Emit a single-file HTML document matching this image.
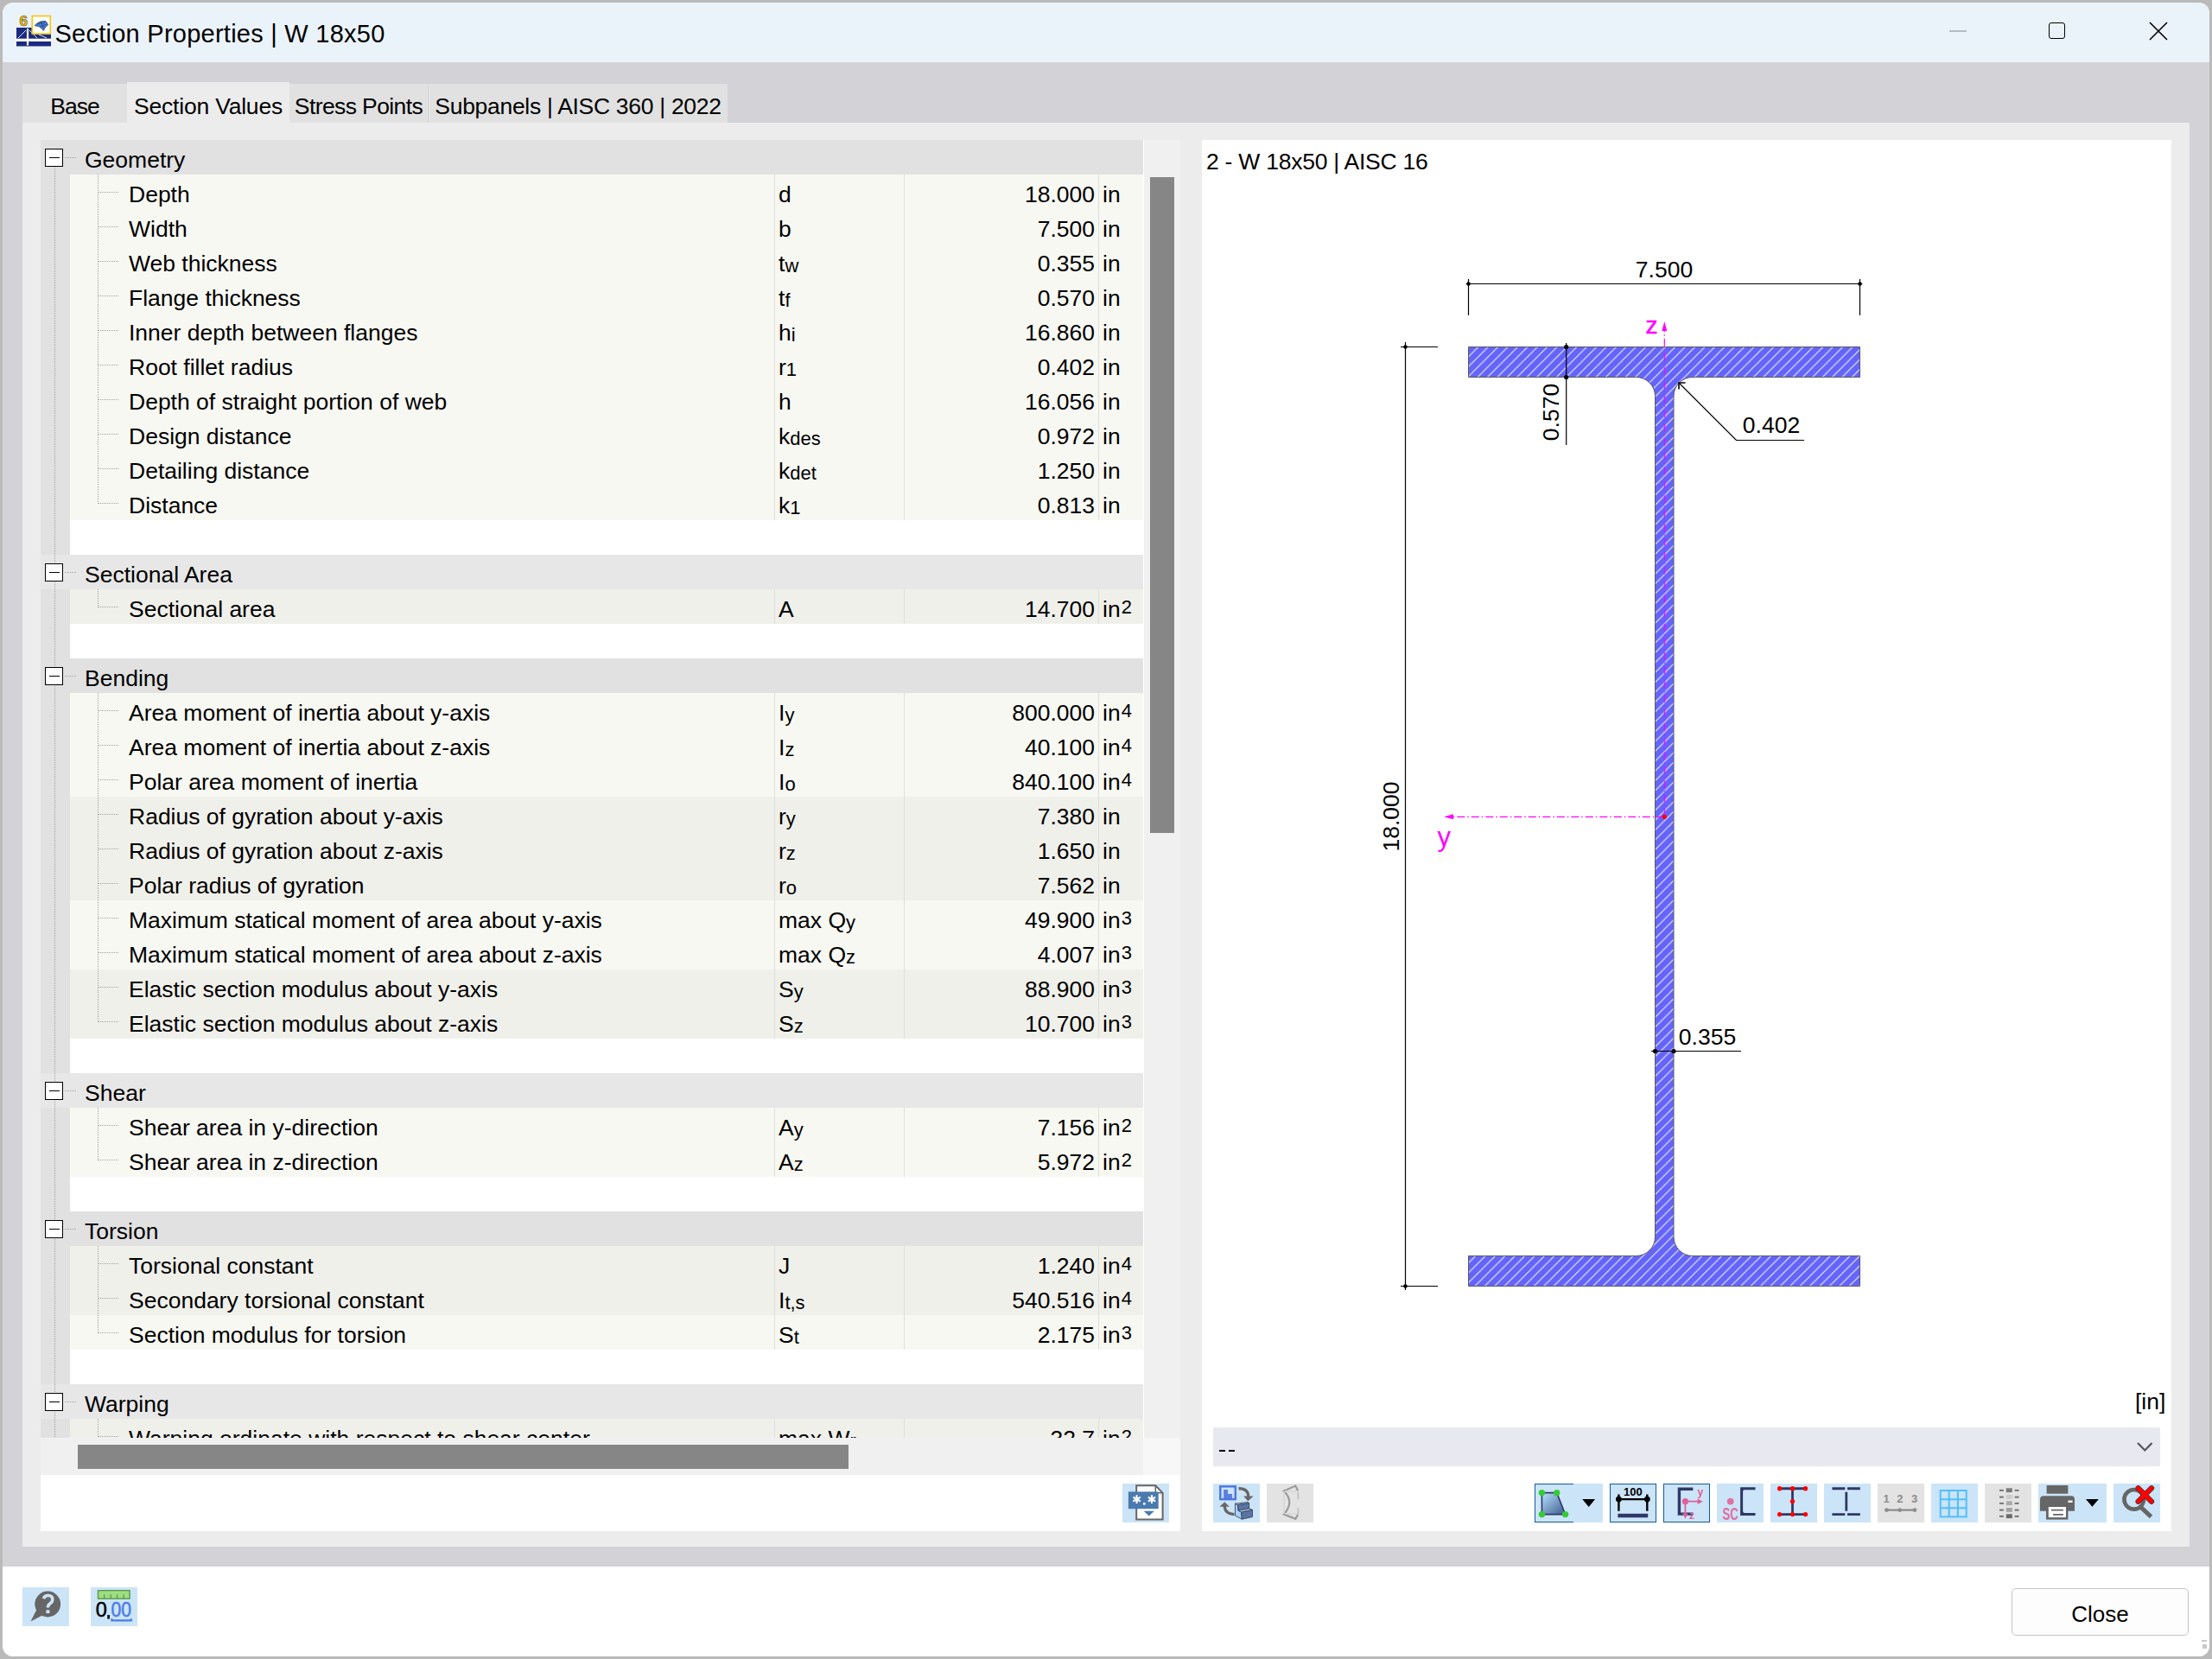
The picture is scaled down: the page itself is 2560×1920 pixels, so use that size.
<!DOCTYPE html>
<html><head><meta charset="utf-8">
<style>
html,body{margin:0;padding:0}
body{width:2560px;height:1920px;overflow:hidden;position:relative;background:#bababa;font-family:"Liberation Sans",sans-serif;color:#000}
.a{position:absolute}
#win{position:absolute;left:0;top:0;width:2560px;height:1920px;clip-path:inset(3px 3px 3px 3px round 12px);background:#d3d2d7}
#title{left:0;top:0;width:2560px;height:72px;background:#ebf3fa}
.tt{font-size:29px;white-space:nowrap;line-height:1}
.tab{position:absolute;top:97px;height:45px;background:#e1e1e1;font-size:26.5px;text-align:center;white-space:nowrap}
.tab span{position:absolute;left:0;right:0;top:13px;line-height:1}
#content{left:26px;top:142px;width:2508px;height:1648px;background:#ececec}
#lp{left:47px;top:162px;width:1319px;height:1610px;background:#fff}
#tbl{left:47px;top:162px;width:1276px;height:1502px;overflow:hidden;background:#e1e1e1}
.hd{position:absolute;left:0;width:1276px;height:40px;background:#e1e1e1}
.ht{position:absolute;left:51px;top:9.5px;font-size:26.5px;line-height:1;white-space:nowrap}
.rw{position:absolute;left:34px;width:1242px;height:40px;font-size:26.5px;white-space:nowrap}
.bl{position:absolute;left:34px;width:1242px;height:40px;background:#fff}
.rw span{position:absolute;top:10px;line-height:1}
.rw .lb{left:68px}
.rw .sy{left:820px}
.rw .vl{right:56px}
.rw .un{left:1195px}
.rw .c1,.rw .c2,.rw .c3{top:0;height:40px;width:1px;background:#dededa}
.rw .c1{left:815px} .rw .c2{left:965px} .rw .c3{left:1190px}
.sb{position:relative!important;font-size:22px;top:1px!important}
.sp{position:relative!important;font-size:22px;top:-4.5px!important;margin-left:1px}
.box{position:absolute;left:5px;width:19px;height:19px;border:1.5px solid #000;background:#fff}
.box:after{content:"";position:absolute;left:3.5px;top:8.5px;width:12px;height:1.5px;background:#000}
.dh{position:absolute;height:1px;background:repeating-linear-gradient(90deg,#a0a0a0 0 1px,transparent 1px 2px)}
.dv{position:absolute;width:1px;background:repeating-linear-gradient(180deg,#a0a0a0 0 1px,transparent 1px 2px)}
.btn{position:absolute;width:54px;height:45px;background:#cce4f7}
.dis{background:#e3e3e3}
.bord{box-sizing:border-box;border:1.5px solid #0f5aa8}
</style></head><body>
<div id="win">
 <div id="title" class="a"></div>
 <!-- app icon -->
 <svg class="a" style="left:0;top:0" width="70" height="70">
  <rect x="19" y="32" width="40" height="21.5" fill="#1a2a7f"/>
  <rect x="19" y="44.7" width="40" height="3.3" fill="#fff"/>
  <rect x="30.9" y="33" width="2.2" height="19.5" fill="#fff"/>
  <path d="M21 44L30 35M34 35L43 44M45 40L54 44" stroke="#dfe4f5" stroke-width="1"/>
  <text x="22.6" y="30.2" font-family="Liberation Sans" font-weight="bold" font-size="17" fill="#f5c518" stroke="#5a4a10" stroke-width="0.6">6</text>
  <rect x="37.3" y="18.5" width="21" height="20.6" fill="#fff" stroke="#f5c518" stroke-width="1.7"/>
  <path d="M40 29.5Q46 23.5 53 24.5Q55 27 55.5 29Q51 32 50.5 35.5Q46 29.5 40 29.5Z" fill="#3d7be0" stroke="#333" stroke-width="0.7"/>
  <path d="M43 28L52 26M46 31L54 28M47 25L51 33" stroke="#222" stroke-width="0.5"/>
 </svg>
 <div class="a tt" style="left:63.5px;top:25px;letter-spacing:0.25px">Section Properties | W 18x50</div>
 <!-- window controls -->
 <div class="a" style="left:2256px;top:35px;width:20px;height:2px;background:#b4bcc2"></div>
 <div class="a" style="left:2371px;top:26px;width:16.6px;height:16.6px;border:1.9px solid #000;border-radius:3px"></div>
 <svg class="a" style="left:2486px;top:24px" width="24" height="24"><path d="M2 2L22 22M22 2L2 22" stroke="#000" stroke-width="1.6"/></svg>

 <!-- tabs -->
 <div class="tab" style="left:26px;width:121px"><span style="letter-spacing:-1px">Base</span></div>
 <div class="tab" style="left:147px;width:188px;top:95px;height:47px;background:#ececec"><span style="top:15px;letter-spacing:-0.2px">Section Values</span></div>
 <div class="tab" style="left:335px;width:160px"><span style="letter-spacing:-0.6px">Stress Points</span></div>
 <div class="a" style="left:495px;top:97px;width:1px;height:45px;background:#d6d6d6"></div>
 <div class="tab" style="left:496px;width:346px"><span style="letter-spacing:-0.3px">Subpanels | AISC 360 | 2022</span></div>

 <div id="content" class="a"></div>
 <div id="lp" class="a"></div>
 <div id="tbl" class="a">
<div class="hd" style="top:0px;left:34px;width:1242px;background:#e1e1e1"><span class="ht" style="left:17px">Geometry</span></div>
<div class="hd" style="top:0px;left:0;width:34px;background:#e1e1e1"></div>
<div class="rw" style="top:40px;background:#f8f8f3"><span class="lb">Depth</span><span class="c1"></span><span class="sy">d</span><span class="c2"></span><span class="vl">18.000</span><span class="c3"></span><span class="un">in</span></div>
<div class="rw" style="top:80px;background:#f8f8f3"><span class="lb">Width</span><span class="c1"></span><span class="sy">b</span><span class="c2"></span><span class="vl">7.500</span><span class="c3"></span><span class="un">in</span></div>
<div class="rw" style="top:120px;background:#f8f8f3"><span class="lb">Web thickness</span><span class="c1"></span><span class="sy">t<span class="sb">w</span></span><span class="c2"></span><span class="vl">0.355</span><span class="c3"></span><span class="un">in</span></div>
<div class="rw" style="top:160px;background:#f8f8f3"><span class="lb">Flange thickness</span><span class="c1"></span><span class="sy">t<span class="sb">f</span></span><span class="c2"></span><span class="vl">0.570</span><span class="c3"></span><span class="un">in</span></div>
<div class="rw" style="top:200px;background:#f8f8f3"><span class="lb">Inner depth between flanges</span><span class="c1"></span><span class="sy">h<span class="sb">i</span></span><span class="c2"></span><span class="vl">16.860</span><span class="c3"></span><span class="un">in</span></div>
<div class="rw" style="top:240px;background:#f8f8f3"><span class="lb">Root fillet radius</span><span class="c1"></span><span class="sy">r<span class="sb">1</span></span><span class="c2"></span><span class="vl">0.402</span><span class="c3"></span><span class="un">in</span></div>
<div class="rw" style="top:280px;background:#f8f8f3"><span class="lb">Depth of straight portion of web</span><span class="c1"></span><span class="sy">h</span><span class="c2"></span><span class="vl">16.056</span><span class="c3"></span><span class="un">in</span></div>
<div class="rw" style="top:320px;background:#f8f8f3"><span class="lb">Design distance</span><span class="c1"></span><span class="sy">k<span class="sb">des</span></span><span class="c2"></span><span class="vl">0.972</span><span class="c3"></span><span class="un">in</span></div>
<div class="rw" style="top:360px;background:#f8f8f3"><span class="lb">Detailing distance</span><span class="c1"></span><span class="sy">k<span class="sb">det</span></span><span class="c2"></span><span class="vl">1.250</span><span class="c3"></span><span class="un">in</span></div>
<div class="rw" style="top:400px;background:#f8f8f3"><span class="lb">Distance</span><span class="c1"></span><span class="sy">k<span class="sb">1</span></span><span class="c2"></span><span class="vl">0.813</span><span class="c3"></span><span class="un">in</span></div>
<div class="bl" style="top:440px"></div>
<div class="hd" style="top:480px;left:34px;width:1242px;background:#e7e7e7"><span class="ht" style="left:17px">Sectional Area</span></div>
<div class="hd" style="top:480px;left:0;width:34px;background:#e7e7e7"></div>
<div class="rw" style="top:520px;background:#f0f0eb"><span class="lb">Sectional area</span><span class="c1"></span><span class="sy">A</span><span class="c2"></span><span class="vl">14.700</span><span class="c3"></span><span class="un">in<span class="sp">2</span></span></div>
<div class="bl" style="top:560px"></div>
<div class="hd" style="top:600px;left:34px;width:1242px;background:#e1e1e1"><span class="ht" style="left:17px">Bending</span></div>
<div class="hd" style="top:600px;left:0;width:34px;background:#e1e1e1"></div>
<div class="rw" style="top:640px;background:#f8f8f3"><span class="lb">Area moment of inertia about y-axis</span><span class="c1"></span><span class="sy">I<span class="sb">y</span></span><span class="c2"></span><span class="vl">800.000</span><span class="c3"></span><span class="un">in<span class="sp">4</span></span></div>
<div class="rw" style="top:680px;background:#f8f8f3"><span class="lb">Area moment of inertia about z-axis</span><span class="c1"></span><span class="sy">I<span class="sb">z</span></span><span class="c2"></span><span class="vl">40.100</span><span class="c3"></span><span class="un">in<span class="sp">4</span></span></div>
<div class="rw" style="top:720px;background:#f8f8f3"><span class="lb">Polar area moment of inertia</span><span class="c1"></span><span class="sy">I<span class="sb">o</span></span><span class="c2"></span><span class="vl">840.100</span><span class="c3"></span><span class="un">in<span class="sp">4</span></span></div>
<div class="rw" style="top:760px;background:#f0f0eb"><span class="lb">Radius of gyration about y-axis</span><span class="c1"></span><span class="sy">r<span class="sb">y</span></span><span class="c2"></span><span class="vl">7.380</span><span class="c3"></span><span class="un">in</span></div>
<div class="rw" style="top:800px;background:#f0f0eb"><span class="lb">Radius of gyration about z-axis</span><span class="c1"></span><span class="sy">r<span class="sb">z</span></span><span class="c2"></span><span class="vl">1.650</span><span class="c3"></span><span class="un">in</span></div>
<div class="rw" style="top:840px;background:#f0f0eb"><span class="lb">Polar radius of gyration</span><span class="c1"></span><span class="sy">r<span class="sb">o</span></span><span class="c2"></span><span class="vl">7.562</span><span class="c3"></span><span class="un">in</span></div>
<div class="rw" style="top:880px;background:#f8f8f3"><span class="lb">Maximum statical moment of area about y-axis</span><span class="c1"></span><span class="sy">max Q<span class="sb">y</span></span><span class="c2"></span><span class="vl">49.900</span><span class="c3"></span><span class="un">in<span class="sp">3</span></span></div>
<div class="rw" style="top:920px;background:#f8f8f3"><span class="lb">Maximum statical moment of area about z-axis</span><span class="c1"></span><span class="sy">max Q<span class="sb">z</span></span><span class="c2"></span><span class="vl">4.007</span><span class="c3"></span><span class="un">in<span class="sp">3</span></span></div>
<div class="rw" style="top:960px;background:#f0f0eb"><span class="lb">Elastic section modulus about y-axis</span><span class="c1"></span><span class="sy">S<span class="sb">y</span></span><span class="c2"></span><span class="vl">88.900</span><span class="c3"></span><span class="un">in<span class="sp">3</span></span></div>
<div class="rw" style="top:1000px;background:#f0f0eb"><span class="lb">Elastic section modulus about z-axis</span><span class="c1"></span><span class="sy">S<span class="sb">z</span></span><span class="c2"></span><span class="vl">10.700</span><span class="c3"></span><span class="un">in<span class="sp">3</span></span></div>
<div class="bl" style="top:1040px"></div>
<div class="hd" style="top:1080px;left:34px;width:1242px;background:#e7e7e7"><span class="ht" style="left:17px">Shear</span></div>
<div class="hd" style="top:1080px;left:0;width:34px;background:#e7e7e7"></div>
<div class="rw" style="top:1120px;background:#f8f8f3"><span class="lb">Shear area in y-direction</span><span class="c1"></span><span class="sy">A<span class="sb">y</span></span><span class="c2"></span><span class="vl">7.156</span><span class="c3"></span><span class="un">in<span class="sp">2</span></span></div>
<div class="rw" style="top:1160px;background:#f8f8f3"><span class="lb">Shear area in z-direction</span><span class="c1"></span><span class="sy">A<span class="sb">z</span></span><span class="c2"></span><span class="vl">5.972</span><span class="c3"></span><span class="un">in<span class="sp">2</span></span></div>
<div class="bl" style="top:1200px"></div>
<div class="hd" style="top:1240px;left:34px;width:1242px;background:#e1e1e1"><span class="ht" style="left:17px">Torsion</span></div>
<div class="hd" style="top:1240px;left:0;width:34px;background:#e1e1e1"></div>
<div class="rw" style="top:1280px;background:#f0f0eb"><span class="lb">Torsional constant</span><span class="c1"></span><span class="sy">J</span><span class="c2"></span><span class="vl">1.240</span><span class="c3"></span><span class="un">in<span class="sp">4</span></span></div>
<div class="rw" style="top:1320px;background:#f0f0eb"><span class="lb">Secondary torsional constant</span><span class="c1"></span><span class="sy">I<span class="sb">t,s</span></span><span class="c2"></span><span class="vl">540.516</span><span class="c3"></span><span class="un">in<span class="sp">4</span></span></div>
<div class="rw" style="top:1360px;background:#f8f8f3"><span class="lb">Section modulus for torsion</span><span class="c1"></span><span class="sy">S<span class="sb">t</span></span><span class="c2"></span><span class="vl">2.175</span><span class="c3"></span><span class="un">in<span class="sp">3</span></span></div>
<div class="bl" style="top:1400px"></div>
<div class="hd" style="top:1440px;left:34px;width:1242px;background:#e7e7e7"><span class="ht" style="left:17px">Warping</span></div>
<div class="hd" style="top:1440px;left:0;width:34px;background:#e7e7e7"></div>
<div class="rw" style="top:1480px;background:#f0f0eb"><span class="lb">Warping ordinate with respect to shear center</span><span class="c1"></span><span class="sy">max W<span class="sb">r</span></span><span class="c2"></span><span class="vl">32.7</span><span class="c3"></span><span class="un">in<span class="sp">2</span></span></div>
<div class="bl" style="top:1520px"></div>
<div class="dv" style="left:16px;top:32px;height:1500px"></div>
<div class="box" style="top:10px"></div>
<div class="dh" style="left:28px;top:20px;width:13px"></div>
<div class="dh" style="left:67px;top:60px;width:24px"></div>
<div class="dh" style="left:67px;top:100px;width:24px"></div>
<div class="dh" style="left:67px;top:140px;width:24px"></div>
<div class="dh" style="left:67px;top:180px;width:24px"></div>
<div class="dh" style="left:67px;top:220px;width:24px"></div>
<div class="dh" style="left:67px;top:260px;width:24px"></div>
<div class="dh" style="left:67px;top:300px;width:24px"></div>
<div class="dh" style="left:67px;top:340px;width:24px"></div>
<div class="dh" style="left:67px;top:380px;width:24px"></div>
<div class="dh" style="left:67px;top:420px;width:24px"></div>
<div class="dv" style="left:66px;top:40px;height:381px"></div>
<div class="box" style="top:490px"></div>
<div class="dh" style="left:28px;top:500px;width:13px"></div>
<div class="dh" style="left:67px;top:540px;width:24px"></div>
<div class="dv" style="left:66px;top:520px;height:21px"></div>
<div class="box" style="top:610px"></div>
<div class="dh" style="left:28px;top:620px;width:13px"></div>
<div class="dh" style="left:67px;top:660px;width:24px"></div>
<div class="dh" style="left:67px;top:700px;width:24px"></div>
<div class="dh" style="left:67px;top:740px;width:24px"></div>
<div class="dh" style="left:67px;top:780px;width:24px"></div>
<div class="dh" style="left:67px;top:820px;width:24px"></div>
<div class="dh" style="left:67px;top:860px;width:24px"></div>
<div class="dh" style="left:67px;top:900px;width:24px"></div>
<div class="dh" style="left:67px;top:940px;width:24px"></div>
<div class="dh" style="left:67px;top:980px;width:24px"></div>
<div class="dh" style="left:67px;top:1020px;width:24px"></div>
<div class="dv" style="left:66px;top:640px;height:381px"></div>
<div class="box" style="top:1090px"></div>
<div class="dh" style="left:28px;top:1100px;width:13px"></div>
<div class="dh" style="left:67px;top:1140px;width:24px"></div>
<div class="dh" style="left:67px;top:1180px;width:24px"></div>
<div class="dv" style="left:66px;top:1120px;height:61px"></div>
<div class="box" style="top:1250px"></div>
<div class="dh" style="left:28px;top:1260px;width:13px"></div>
<div class="dh" style="left:67px;top:1300px;width:24px"></div>
<div class="dh" style="left:67px;top:1340px;width:24px"></div>
<div class="dh" style="left:67px;top:1380px;width:24px"></div>
<div class="dv" style="left:66px;top:1280px;height:101px"></div>
<div class="box" style="top:1450px"></div>
<div class="dh" style="left:28px;top:1460px;width:13px"></div>
<div class="dh" style="left:67px;top:1500px;width:24px"></div>
<div class="dv" style="left:66px;top:1480px;height:21px"></div>
 </div>
 <!-- scrollbars -->
 <div class="a" style="left:1323px;top:162px;width:1px;height:1502px;background:#fff"></div>
 <div class="a" style="left:1324px;top:162px;width:42px;height:1502px;background:#f0f0f0"></div>
 <div class="a" style="left:1331px;top:205px;width:28px;height:759px;background:#868686"></div>
 <div class="a" style="left:47px;top:1664px;width:1276px;height:43px;background:#f0f0f0"></div>
 <div class="a" style="left:90px;top:1672px;width:892px;height:28px;background:#868686"></div>
 <div class="a" style="left:1323px;top:1664px;width:43px;height:43px;background:#f7f7f7"></div>
 <!-- export button -->
 <div class="btn" style="left:1299px;top:1717px"></div>

 <!-- graphics panel -->
 <div class="a" style="left:1391px;top:162px;width:1122px;height:1610px;background:#fff"></div>
 <div class="a" style="left:1396px;top:174px;font-size:26.5px;line-height:1;white-space:nowrap;letter-spacing:-0.25px">2 - W 18x50 | AISC 16</div>
<svg class="a" style="left:0;top:0" width="2560" height="1920">
<defs><pattern id="hatch" patternUnits="userSpaceOnUse" width="11.4" height="11.4" patternTransform="translate(1699.5 401.5)"><rect width="11.4" height="11.4" fill="#6464fa"/><path d="M-1 12.4L12.4 -1M-6.7 6.7L6.7 -6.7M4.7 18.1L18.1 4.7" stroke="#f0f0ff" stroke-width="1.1"/></pattern></defs>
<path d="M1699.5 401.5H2152.5V436.5H1959A22 22 0 0 0 1937 458.5V1431.5A22 22 0 0 0 1959 1453.5H2152.5V1488.5H1699.5V1453.5H1893.5A22 22 0 0 0 1915.5 1431.5V458.5A22 22 0 0 0 1893.5 436.5H1699.5Z" fill="url(#hatch)" stroke="#5a5a5a" stroke-width="1"/>
<line x1="1926.3" y1="945.3" x2="1926.3" y2="382" stroke="#ff00ff" stroke-width="1.2" stroke-dasharray="9 3 1.5 3"/>
<path d="M1926.3 372L1923.3 383L1929.3 383Z" fill="#ff00ff"/>
<text x="1904.5" y="386" font-family="Liberation Sans" font-size="28" fill="#ff00ff" stroke="#ff00ff" stroke-width="0.6">z</text>
<line x1="1926.3" y1="945.3" x2="1681" y2="945.3" stroke="#ff00ff" stroke-width="1.2" stroke-dasharray="9 3 1.5 3"/>
<path d="M1671 945.3L1682 942.3L1682 948.3Z" fill="#ff00ff"/>
<text x="1663.5" y="979" font-family="Liberation Sans" font-size="31" fill="#ff00ff">y</text>
<circle cx="1926.3" cy="945.3" r="2.6" fill="#ff0000"/>
<g stroke="#000" stroke-width="1.2" fill="none">
<line x1="1699.5" y1="328.5" x2="2152.5" y2="328.5"/>
<line x1="1699.5" y1="323" x2="1699.5" y2="365"/>
<line x1="2152.5" y1="323" x2="2152.5" y2="365"/>
<line x1="1626.5" y1="396" x2="1626.5" y2="1493"/>
<line x1="1621" y1="401.5" x2="1664" y2="401.5"/>
<line x1="1621" y1="1488.5" x2="1664" y2="1488.5"/>
<line x1="1812.7" y1="397" x2="1812.7" y2="515"/>
<path d="M1943 443L2009.5 509.5H2088"/>
<path d="M1943 450.5V443H1950.5" stroke-width="1.6"/>
<line x1="1911" y1="1216.5" x2="2015" y2="1216.5"/>
</g>
<path d="M1696.5 328.5L1699.5 325.5L1702.5 328.5L1699.5 331.5Z" fill="#000"/>
<path d="M2149.5 328.5L2152.5 325.5L2155.5 328.5L2152.5 331.5Z" fill="#000"/>
<path d="M1623.5 401.5L1626.5 398.5L1629.5 401.5L1626.5 404.5Z" fill="#000"/>
<path d="M1623.5 1488.5L1626.5 1485.5L1629.5 1488.5L1626.5 1491.5Z" fill="#000"/>
<circle cx="1812.7" cy="401.5" r="2.6" fill="#000"/>
<circle cx="1812.7" cy="436.5" r="2.6" fill="#000"/>
<circle cx="1915.5" cy="1216.5" r="2.6" fill="#000"/>
<circle cx="1937" cy="1216.5" r="2.6" fill="#000"/>
<text x="1926" y="321" text-anchor="middle" font-family="Liberation Sans" font-size="26.5" fill="#000">7.500</text>
<text x="2050" y="501" text-anchor="middle" font-family="Liberation Sans" font-size="26.5" fill="#000">0.402</text>
<text x="1976" y="1209" text-anchor="middle" font-family="Liberation Sans" font-size="26.5" fill="#000">0.355</text>
<text transform="translate(1804.3 477) rotate(-90)" text-anchor="middle" font-family="Liberation Sans" font-size="26.5" fill="#000">0.570</text>
<text transform="translate(1618.8 945) rotate(-90)" text-anchor="middle" font-family="Liberation Sans" font-size="26.5" fill="#000">18.000</text>
</svg>
 <div class="a" style="left:2471px;top:1608.5px;font-size:26.5px;line-height:1;white-space:nowrap">[in]</div>
 <div class="a" style="left:1404px;top:1652px;width:1096px;height:45px;background:#e8e8f1"></div>
 <div class="a" style="left:1411px;top:1677.8px;width:7.2px;height:2.2px;background:#000"></div><div class="a" style="left:1422px;top:1677.8px;width:7.2px;height:2.2px;background:#000"></div>
 <svg class="a" style="left:2470px;top:1666px" width="24" height="18"><path d="M4 4L12.3 12.5L20.5 4" stroke="#555" stroke-width="2.2" fill="none"/></svg>

 <!-- toolbar buttons -->
 <div class="btn" style="left:1404px;top:1717px"></div>
 <div class="btn dis" style="left:1466px;top:1717px"></div>
 <div class="btn" style="left:1776px;top:1717px;width:79px"></div>
 <div class="btn bord" style="left:1776px;top:1717px;width:45px;background:transparent;border-right:none"></div>
 <div class="btn bord" style="left:1863px;top:1717px"></div>
 <div class="btn bord" style="left:1925px;top:1717px"></div>
 <div class="btn" style="left:1987px;top:1717px"></div>
 <div class="btn" style="left:2049px;top:1717px"></div>
 <div class="btn" style="left:2111px;top:1717px"></div>
 <div class="btn dis" style="left:2173px;top:1717px"></div>
 <div class="btn" style="left:2235px;top:1717px"></div>
 <div class="btn dis" style="left:2297px;top:1717px"></div>
 <div class="btn" style="left:2359px;top:1717px;width:79px"></div>
 <div class="btn" style="left:2446px;top:1717px"></div>

 <!-- footer -->
 <div class="a" style="left:0;top:1813px;width:2560px;height:107px;background:#fff"></div>
 <div class="btn" style="left:26px;top:1837px"></div>
 <div class="btn" style="left:105px;top:1837px"></div>
 <div class="a" style="left:2328px;top:1838px;width:203px;height:53px;border:1px solid #c6c6c6;border-radius:5px;background:#fdfdfd"></div>
 <div class="a" style="left:2328px;top:1855px;width:205px;text-align:center;font-size:26px;line-height:1">Close</div>
<svg class="a" style="left:1404px;top:1717px" width="54" height="45"><rect x="8.3" y="3.3" width="17.5" height="14.8" fill="none" stroke="#4f78e0" stroke-width="2.5"/><path d="M12.2 17V7H17V12H22V17Z" fill="#5a80e0"/><path d="M29.5 5.6Q40.5 5.5 40.8 15" stroke="#666" stroke-width="3.2" fill="none"/><path d="M35.1 14.5H46.7L40.3 20.3Z" fill="#666"/><path d="M7.5 26.7H18.9L13.2 21.2Z" fill="#666"/><path d="M13.2 26Q13.5 35 24.5 35.6" stroke="#666" stroke-width="3.2" fill="none"/><g stroke="#3c4658" stroke-width="0.9" stroke-linejoin="round"><path d="M25.45 23.2L28.5 24.6L29.1 31.3L32.6 33.05L33.4 41.2L25.45 37.1Z" fill="#a8d0ff"/><path d="M25.45 23.2L40.1 21.5L41.65 22.6L28.5 24.6Z" fill="#b8dcff"/><path d="M28.5 24.6L41.65 22.6V29L29.1 31.3Z" fill="#5a74a4"/><path d="M29.1 31.3L41.65 29L45.5 30.4L32.6 33.05Z" fill="#b8dcff"/><path d="M32.6 33.05L45.5 30.4V38.5L33.4 41.2Z" fill="#5a74a4"/></g></svg>
<svg class="a" style="left:1466px;top:1717px" width="54" height="45"><path d="M36.3 8.8L33.3 2.6L19.8 8.5Q26.3 15 26.3 21.4Q26.3 28 19.8 35.6L33.3 40.8L36.3 35.6" fill="none" stroke="#9a9a9a" stroke-width="2.2"/><path d="M21 9H36M21 35H36M20 9V35" stroke="#d6d6d6" stroke-width="1.5" fill="none"/><path d="M36.3 10V18M36.3 28V35" stroke="#c4c4c4" stroke-width="2"/></svg>
<svg class="a" style="left:1776px;top:1717px" width="79" height="45"><defs><linearGradient id="tg" x1="0" y1="0" x2="1" y2="1"><stop offset="0" stop-color="#b8e2ff"/><stop offset="1" stop-color="#3e5a8c"/></linearGradient></defs><path d="M8.45 10.6H25.7L35.6 35.6H8.45Z" fill="url(#tg)" stroke="#2a3a6a" stroke-width="1.6"/><circle cx="8.45" cy="10.6" r="3.7" fill="#33cc33"/><circle cx="25.7" cy="10.6" r="3.7" fill="#33cc33"/><circle cx="8.45" cy="35.6" r="3.7" fill="#33cc33"/><circle cx="35.6" cy="35.6" r="3.7" fill="#33cc33"/><path d="M55.2 18.1H70.1L62.7 26.9Z" fill="#000"/></svg>
<svg class="a" style="left:1863px;top:1717px" width="54" height="45"><text x="26.8" y="14" text-anchor="middle" font-family="Liberation Sans" font-weight="bold" font-size="13" fill="#000">100</text><path d="M10.4 18.1H43.3M10.4 12.4V31.8M43.3 12.4V31.8" stroke="#000" stroke-width="2.4"/><circle cx="10.4" cy="18.1" r="3.4" fill="#000"/><circle cx="43.3" cy="18.1" r="3.4" fill="#000"/><rect x="9.4" y="34.8" width="34.8" height="4.5" fill="#2e3866"/></svg>
<svg class="a" style="left:1925px;top:1717px" width="54" height="45"><path d="M34.3 6.2H18.4V35.1H34.3" fill="none" stroke="#2e3866" stroke-width="3.4"/><path d="M25.4 20.7H41M25.4 20.7V36" stroke="#e0609a" stroke-width="1.8"/><path d="M45.7 20.7L39.5 17.5V23.9Z" fill="#e0609a"/><path d="M25.4 40.8L22.2 34.6H28.6Z" fill="#e0609a"/><circle cx="25.4" cy="20.7" r="3.6" fill="#e0609a"/><text x="39.5" y="14" font-family="Liberation Sans" font-weight="bold" font-size="12" fill="#e0609a">y</text><text x="30" y="41.3" font-family="Liberation Sans" font-weight="bold" font-size="12" fill="#e0609a">z</text></svg>
<svg class="a" style="left:1987px;top:1717px" width="54" height="45"><path d="M44.5 4.3H27.1V36.9H44.5V33.9H31.9Q30.1 33.9 30.1 32.1V9.1Q30.1 7.3 31.9 7.3H44.5Z" fill="#2e3866"/><circle cx="15.7" cy="20.6" r="3.9" fill="#e070a0"/><g transform="translate(15.7 41.6) scale(0.66 1)"><text x="0" y="0" text-anchor="middle" font-family="Liberation Sans" font-weight="bold" font-size="20" fill="#e070a0">SC</text></g></svg>
<svg class="a" style="left:2049px;top:1717px" width="54" height="45"><path d="M10.6 5.75H40.5M10.6 35.6H40.5M25.5 5.75V35.6" stroke="#2e3866" stroke-width="2.8"/><circle cx="10.6" cy="5.75" r="2.7" fill="#ff0000"/><circle cx="25.5" cy="5.75" r="2.7" fill="#ff0000"/><circle cx="40.5" cy="5.75" r="2.7" fill="#ff0000"/><circle cx="25.5" cy="20.6" r="2.7" fill="#ff0000"/><circle cx="10.6" cy="35.6" r="2.7" fill="#ff0000"/><circle cx="25.5" cy="35.6" r="2.7" fill="#ff0000"/><circle cx="40.5" cy="35.6" r="2.7" fill="#ff0000"/></svg>
<svg class="a" style="left:2111px;top:1717px" width="54" height="45"><path d="M9.4 5.75H24.3M27 5.75H41.8M9.4 35.6H24.3M27 35.6H41.8M25.8 9.8V31.8" stroke="#2e3866" stroke-width="2.8"/></svg>
<svg class="a" style="left:2173px;top:1717px" width="54" height="45"><text x="10" y="21.8" text-anchor="middle" font-family="Liberation Sans" font-weight="bold" font-size="13" fill="#8c8c8c">1</text><text x="25.8" y="21.8" text-anchor="middle" font-family="Liberation Sans" font-weight="bold" font-size="13" fill="#8c8c8c">2</text><text x="42.6" y="21.8" text-anchor="middle" font-family="Liberation Sans" font-weight="bold" font-size="13" fill="#8c8c8c">3</text><path d="M10.4 30.6H43" stroke="#8c8c8c" stroke-width="2.3"/><circle cx="10.4" cy="30.6" r="2.4" fill="#8c8c8c"/><circle cx="25.7" cy="30.6" r="2.4" fill="#8c8c8c"/><circle cx="43" cy="30.6" r="2.4" fill="#8c8c8c"/></svg>
<svg class="a" style="left:2235px;top:1717px" width="54" height="45"><rect x="10.7" y="8" width="30" height="30.4" fill="none" stroke="#4fbfff" stroke-width="2"/><path d="M20.7 8V38.4M30.9 8V38.4M10.7 18.2H40.7M10.7 28.2H40.7" stroke="#4fbfff" stroke-width="2"/></svg>
<svg class="a" style="left:2297px;top:1717px" width="54" height="45"><rect x="17" y="6.9" width="4.9" height="2" fill="#757575"/><rect x="34.6" y="6.9" width="4.9" height="2" fill="#757575"/><rect x="24.8" y="5.300000000000001" width="7" height="4.8" fill="#7a7a7a"/><rect x="17" y="14.6" width="4.9" height="2" fill="#757575"/><rect x="34.6" y="14.6" width="4.9" height="2" fill="#757575"/><rect x="24.8" y="13.0" width="7" height="4.8" fill="#cacaca"/><rect x="17" y="21.9" width="4.9" height="2" fill="#757575"/><rect x="34.6" y="21.9" width="4.9" height="2" fill="#757575"/><rect x="24.8" y="20.299999999999997" width="7" height="4.8" fill="#aaaaaa"/><rect x="17" y="29.6" width="4.9" height="2" fill="#757575"/><rect x="34.6" y="29.6" width="4.9" height="2" fill="#757575"/><rect x="24.8" y="28.0" width="7" height="4.8" fill="#a2a2a2"/><rect x="17" y="36.9" width="4.9" height="2" fill="#757575"/><rect x="34.6" y="36.9" width="4.9" height="2" fill="#757575"/><rect x="24.8" y="35.3" width="7" height="4.8" fill="#6a6a6a"/></svg>
<svg class="a" style="left:2359px;top:1717px" width="79" height="45"><rect x="9.6" y="2" width="24.8" height="9.7" fill="#666"/><path d="M2 31.8V18.3Q2 14.3 6 14.3H38Q42 14.3 42 18.3V31.8Z" fill="#666"/><rect x="34.4" y="19.5" width="5.2" height="2.5" fill="#eee"/><rect x="9" y="26.8" width="25.4" height="14.8" fill="#666"/><rect x="11.8" y="27" width="20.2" height="12.1" fill="#fff"/><path d="M14.8 30.6H28.9M17 35.8H28.9" stroke="#666" stroke-width="1.8"/><path d="M55 17.9H69.8L62.4 26.8Z" fill="#000"/></svg>
<svg class="a" style="left:2446px;top:1717px" width="54" height="45"><circle cx="23.7" cy="18.3" r="11.3" fill="none" stroke="#666" stroke-width="4.6"/><path d="M31.2 26.8L43.5 38.3" stroke="#666" stroke-width="5"/><path d="M28.6 5.3L44 20.7M44 5.3L28.6 20.7" stroke="#334" stroke-width="6.2" stroke-linecap="round"/><path d="M28.6 5.3L44 20.7M44 5.3L28.6 20.7" stroke="#ff0000" stroke-width="5" stroke-linecap="round"/></svg>
<svg class="a" style="left:1299px;top:1717px" width="54" height="45"><path d="M16.2 2.2H38.3L46.6 10.8V41.5H16.2Z" fill="#fff" stroke="#666" stroke-width="2"/><path d="M38.3 2.2V10.8H46.6" fill="none" stroke="#666" stroke-width="1.5"/><rect x="6.9" y="9.4" width="34.8" height="19.8" fill="#4a7ab0"/><path d="M16.6 13.3V22.9M12.400000000000002 15.7L20.8 20.5M20.8 15.7L12.400000000000002 20.5" stroke="#fff" stroke-width="2.1"/><path d="M34.0 13.3V22.9M29.8 15.7L38.2 20.5M38.2 15.7L29.8 20.5" stroke="#fff" stroke-width="2.1"/><rect x="24" y="22" width="2.6" height="2.6" fill="#fff"/><path d="M24.6 31.8H36.9L30.7 37.6Z" fill="#4a7ab0"/></svg>
<svg class="a" style="left:26px;top:1837px" width="54" height="45"><circle cx="29.2" cy="19.5" r="14.9" fill="#666"/><path d="M16.8 25L9.5 39.5L24 32Z" fill="#666"/><path d="M24.5 13.2Q25.5 9.5 29.8 9.5Q34.8 9.6 34.8 14Q34.8 17 31.5 19.2Q29.4 20.6 29.4 23.5" fill="none" stroke="#cce4f7" stroke-width="3.6"/><rect x="27.4" y="26.3" width="4" height="3.8" fill="#cce4f7"/></svg>
<svg class="a" style="left:105px;top:1837px" width="54" height="45"><rect x="8.5" y="3.7" width="36.6" height="9.5" fill="#9ede80" stroke="#5a9a50" stroke-width="1.4"/><path d="M15.6 8.3V13M23.2 8.3V13M30.6 8.3V13M38.2 8.3V13" stroke="#5a9a50" stroke-width="1.3"/><text x="5.8" y="34.4" font-family="Liberation Sans" font-size="23.5" fill="#000" stroke="#000" stroke-width="0.5">0</text><rect x="19.3" y="32" width="2.6" height="4.6" fill="#000"/><text x="23.4" y="34.4" font-family="Liberation Sans" font-size="23.5" fill="#4a7be8" stroke="#4a7be8" stroke-width="0.5" textLength="23.6" lengthAdjust="spacingAndGlyphs">00</text><path d="M24.4 38.3H46.8M24.4 36.3V39.5M46.8 36.3V39.5" stroke="#4a7be8" stroke-width="2.2" fill="none"/></svg>
 <div class="a" style="left:2548px;top:1898px;width:6px;height:2px;background:#c8c8c8"></div><div class="a" style="left:2549px;top:1903px;width:5px;height:5px;background:#c8c8c8"></div>
</div>
</body></html>
